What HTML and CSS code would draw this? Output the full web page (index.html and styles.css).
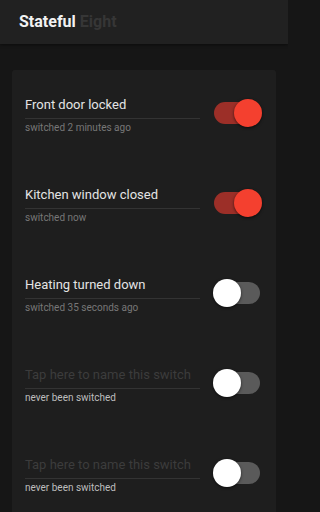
FILE: index.html
```html
<!DOCTYPE html>
<html>
<head>
<meta charset="utf-8">
<meta name="viewport" content="width=288">
<link rel="stylesheet" href="styles.css">
</head>
<body>
<div class="app">
<header class="appbar"><span class="brand">Stateful</span> <span class="brand-dim">Eight</span></header>
<main class="content">
  <section class="card">
    <div class="row">
      <div class="text">
        <div class="name">Front door locked</div>
        <div class="meta">switched 2 minutes ago</div>
      </div>
      <div class="switch on"><span class="track"></span><span class="thumb"></span></div>
    </div>
    <div class="row">
      <div class="text">
        <div class="name">Kitchen window closed</div>
        <div class="meta">switched now</div>
      </div>
      <div class="switch on"><span class="track"></span><span class="thumb"></span></div>
    </div>
    <div class="row">
      <div class="text">
        <div class="name">Heating turned down</div>
        <div class="meta">switched 35 seconds ago</div>
      </div>
      <div class="switch"><span class="track"></span><span class="thumb"></span></div>
    </div>
    <div class="row">
      <div class="text">
        <div class="name placeholder">Tap here to name this switch</div>
        <div class="meta never">never been switched</div>
      </div>
      <div class="switch"><span class="track"></span><span class="thumb"></span></div>
    </div>
    <div class="row">
      <div class="text">
        <div class="name placeholder">Tap here to name this switch</div>
        <div class="meta never">never been switched</div>
      </div>
      <div class="switch"><span class="track"></span><span class="thumb"></span></div>
    </div>
  </section>
</main>
</div>
</body>
</html>
```

FILE: styles.css
```css
html, body {
  margin: 0;
  padding: 0;
  overflow: hidden;
  background: #161616;
}
body {
  font-family: Roboto, "Liberation Sans", sans-serif;
}
.app {
  width: 288px;
  height: 512px;
  overflow: hidden;
  background: #161616;
}
.appbar {
  height: 44px;
  line-height: 44px;
  padding-left: 19px;
  background: #212121;
  font-size: 16px;
  font-weight: 700;
  box-shadow: 0 1px 3px rgba(0,0,0,0.5);
  position: relative;
}
.brand { color: #f2f2f2; }
.brand-dim { color: #363636; }
.content {
  padding: 26px 12px 0 12px;
}
.card {
  box-sizing: border-box;
  background: #1e1e1e;
  border-radius: 3px 3px 0 0;
  padding: 10px 14px 0 13px;
  height: 442px;
}
.row {
  height: 90px;
  display: flex;
  align-items: flex-start;
  justify-content: space-between;
}
.row:last-child {
  height: auto;
}
.text {
  width: 175px;
  padding-top: 14.5px;
}
.name {
  font-size: 13px;
  line-height: 20px;
  color: #e4e4e4;
  padding-bottom: 3px;
  border-bottom: 1px solid #333333;
  white-space: nowrap;
}
.name.placeholder { color: #3c3c3c; }
.meta {
  margin-top: 2.5px;
  font-size: 10px;
  line-height: 14px;
  color: #777777;
}
.meta.never { color: #bdbdbd; }
.switch {
  position: relative;
  width: 49px;
  height: 28px;
  margin-top: 19px;
}
.track {
  position: absolute;
  left: 1px;
  top: 3px;
  width: 46px;
  height: 22px;
  border-radius: 11px;
  background: #5a5a5a;
}
.thumb {
  position: absolute;
  left: 0;
  top: 0;
  width: 28px;
  height: 28px;
  border-radius: 50%;
  background: #ffffff;
  box-shadow: 0 1px 3px rgba(0,0,0,0.6);
}
.switch.on .track { background: #9c2f28; }
.switch.on .thumb { left: 21px; background: #f4402f; }
```
